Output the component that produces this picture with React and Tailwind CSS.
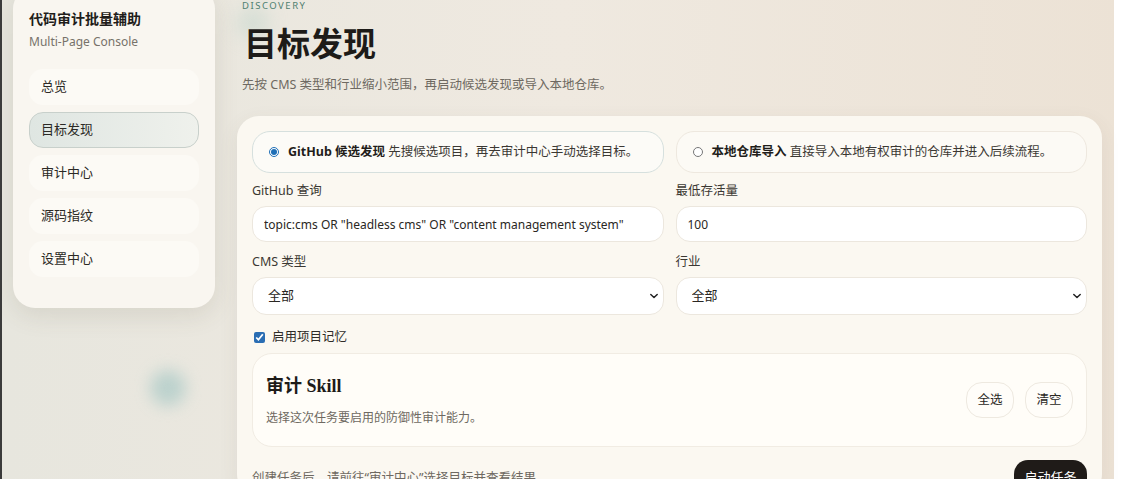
import { useState } from "react";

const navItems = ["总览", "目标发现", "审计中心", "源码指纹", "设置中心"];

function Chevron() {
  return (
    <svg
      viewBox="0 0 10 6"
      className="pointer-events-none absolute right-[6px] top-1/2 -translate-y-1/2 w-[8px] h-[6px]"
    >
      <path d="M1 1l4 4 4-4" fill="none" stroke="#222" strokeWidth="1.8" strokeLinecap="round" strokeLinejoin="round" />
    </svg>
  );
}

function Field({ label, children }) {
  return (
    <div className="flex flex-col gap-[6px]">
      <span className="text-[12.5px] leading-[18px] text-[#3b3833]">{label}</span>
      {children}
    </div>
  );
}

function SelectBox({ value }) {
  return (
    <div className="relative">
      <select
        defaultValue={value}
        className="w-full h-[38px] appearance-none rounded-[14px] border border-[#ece7de] bg-white px-[15px] text-[13px] text-[#2a2723] outline-none"
      >
        <option>全部</option>
      </select>
      <Chevron />
    </div>
  );
}

export default function App() {
  const [mode, setMode] = useState("github");
  const [memory, setMemory] = useState(true);

  return (
    <div
      className="relative flex h-[479px] w-[1125px] overflow-hidden border-l-2 border-[#3b3b3b] bg-gradient-to-r from-[#e7e6de] via-[#efe9e0] to-[#ece2d5]"
      style={{ fontFamily: '"Noto Sans", "Noto Sans CJK SC", sans-serif' }}
    >
      {/* soft blobs */}
      <div className="pointer-events-none absolute left-[148px] top-[370px] h-[36px] w-[36px] rounded-full bg-[#a9c9c6] opacity-70 blur-[8px]" />
      <div className="pointer-events-none absolute left-[236px] top-[8px] h-[30px] w-[30px] rounded-full bg-[#b9d2c8] opacity-50 blur-[10px]" />

      <div className="relative flex flex-1 gap-[22px] pl-[11px] -mt-[13px]">
        <aside className="flex h-[321px] w-[202px] shrink-0 flex-col rounded-[22px] bg-[#f9f6f0] px-[16px] pt-[22px] shadow-[0_8px_24px_rgba(90,80,60,0.12)]">
          <h2 className="text-[14px] font-bold leading-[20px] text-[#1f1d1a]">代码审计批量辅助</h2>
          <p className="mt-[5px] text-[12px] leading-[16px] text-[#77726a]">Multi-Page Console</p>
          <nav className="mt-[19px] flex flex-col gap-[7px]">
            {navItems.map((item) => (
              <div
                key={item}
                className={
                  item === "目标发现"
                    ? "flex h-[36px] items-center rounded-[14px] border border-[#c8d0cb] bg-gradient-to-r from-[#dfe6e2] to-[#eff1ec] px-[11px] text-[13px] text-[#2b2925]"
                    : "flex h-[36px] items-center rounded-[14px] bg-[#fcfaf5] px-[12px] text-[13px] text-[#2b2925]"
                }
              >
                {item}
              </div>
            ))}
          </nav>
        </aside>

        <main className="flex w-[865px] flex-col">
          <div className="pl-[5px] pt-[12px]">
            <p className="text-[9.5px] leading-[14px] tracking-[0.16em] text-[#4f7f70]">DISCOVERY</p>
            <h1
              className="mt-[10px] pl-[2px] text-[33px] font-bold leading-[44px] text-[#1d1b18]"
              style={{ fontFamily: '"Liberation Serif", "Noto Sans CJK SC", serif' }}
            >
              目标发现
            </h1>
            <p className="mt-[8px] text-[12.5px] leading-[20px] text-[#6e6961]">
              先按 CMS 类型和行业缩小范围，再启动候选发现或导入本地仓库。
            </p>
          </div>

          <section className="mt-[21px] flex-1 rounded-[22px] bg-[#fbf8f1] px-[15px] pt-[15px] shadow-[0_6px_20px_rgba(90,80,60,0.08)]">
            <div className="grid grid-cols-2 gap-x-[12px]">
              <label
                className={
                  mode === "github"
                    ? "flex h-[42px] items-center gap-[9px] rounded-[18px] border border-[#d6e0de] bg-[#fcfbf7] px-[16px] text-[12.5px] text-[#3b3833]"
                    : "flex h-[42px] items-center gap-[9px] rounded-[18px] border border-[#eee8df] bg-[#fcfaf5] px-[16px] text-[12.5px] text-[#3b3833]"
                }
              >
                <input
                  type="radio"
                  name="mode"
                  checked={mode === "github"}
                  onChange={() => setMode("github")}
                  className="h-[10px] w-[10px] accent-[#1f6fb6]"
                />
                <span>
                  <b className="font-bold text-[#1f1d1a]">GitHub 候选发现</b> 先搜候选项目，再去审计中心手动选择目标。
                </span>
              </label>
              <label
                className={
                  mode === "local"
                    ? "flex h-[42px] items-center gap-[9px] rounded-[18px] border border-[#d6e0de] bg-[#fcfbf7] px-[16px] text-[12.5px] text-[#3b3833]"
                    : "flex h-[42px] items-center gap-[9px] rounded-[18px] border border-[#eee8df] bg-[#fcfaf5] px-[16px] text-[12.5px] text-[#3b3833]"
                }
              >
                <input
                  type="radio"
                  name="mode"
                  checked={mode === "local"}
                  onChange={() => setMode("local")}
                  className="h-[10px] w-[10px] accent-[#1f6fb6]"
                />
                <span>
                  <b className="font-bold text-[#1f1d1a]">本地仓库导入</b> 直接导入本地有权审计的仓库并进入后续流程。
                </span>
              </label>
            </div>

            <div className="mt-[9px] grid grid-cols-2 gap-x-[12px] gap-y-[11px]">
              <Field label="GitHub 查询">
                <input
                  defaultValue={'topic:cms OR "headless cms" OR "content management system"'}
                  className="h-[36px] rounded-[14px] border border-[#ece7de] bg-white px-[11px] text-[12px] text-[#2a2723] outline-none"
                />
              </Field>
              <Field label="最低存活量">
                <input
                  defaultValue="100"
                  className="h-[36px] rounded-[14px] border border-[#ece7de] bg-white px-[11px] text-[12px] text-[#2a2723] outline-none"
                />
              </Field>
              <Field label="CMS 类型">
                <SelectBox value="全部" />
              </Field>
              <Field label="行业">
                <SelectBox value="全部" />
              </Field>
            </div>

            <label className="mt-[13px] flex h-[18px] items-center gap-[7px] pl-[2px] text-[12.5px] text-[#2f2c28]">
              <input
                type="checkbox"
                checked={memory}
                onChange={() => setMemory(!memory)}
                className="h-[11px] w-[11px] accent-[#2a6db3]"
              />
              启用项目记忆
            </label>

            <div className="mt-[7px] flex h-[94px] items-center justify-between rounded-[20px] border border-[#f1ece3] bg-[#fffdf8] px-[13px]">
              <div className="flex flex-col gap-[10px]">
                <h3
                  className="text-[18px] font-bold leading-[26px] text-[#1d1b18]"
                  style={{ fontFamily: '"Liberation Serif", "Noto Sans CJK SC", serif' }}
                >
                  审计 Skill
                </h3>
                <p className="text-[12px] leading-[18px] text-[#6e6961]">选择这次任务要启用的防御性审计能力。</p>
              </div>
              <div className="flex gap-[11px]">
                <button className="h-[36px] w-[48px] rounded-[16px] border border-[#eee9e0] bg-[#fffdf9] text-[12.5px] text-[#2a2723]">
                  全选
                </button>
                <button className="h-[36px] w-[48px] rounded-[16px] border border-[#eee9e0] bg-[#fffdf9] text-[12.5px] text-[#2a2723]">
                  清空
                </button>
              </div>
            </div>

            <div className="mt-[13px] flex items-start justify-between">
              <p className="pt-[8px] text-[12.5px] leading-[20px] text-[#6e6961]">
                创建任务后，请前往“审计中心”选择目标并查看结果。
              </p>
              <button className="h-[36px] w-[73px] rounded-[14px] bg-[#1f1b18] text-[13px] text-white">启动任务</button>
            </div>
          </section>
        </main>
      </div>

      <div className="w-[11px] shrink-0 bg-white" />
    </div>
  );
}
